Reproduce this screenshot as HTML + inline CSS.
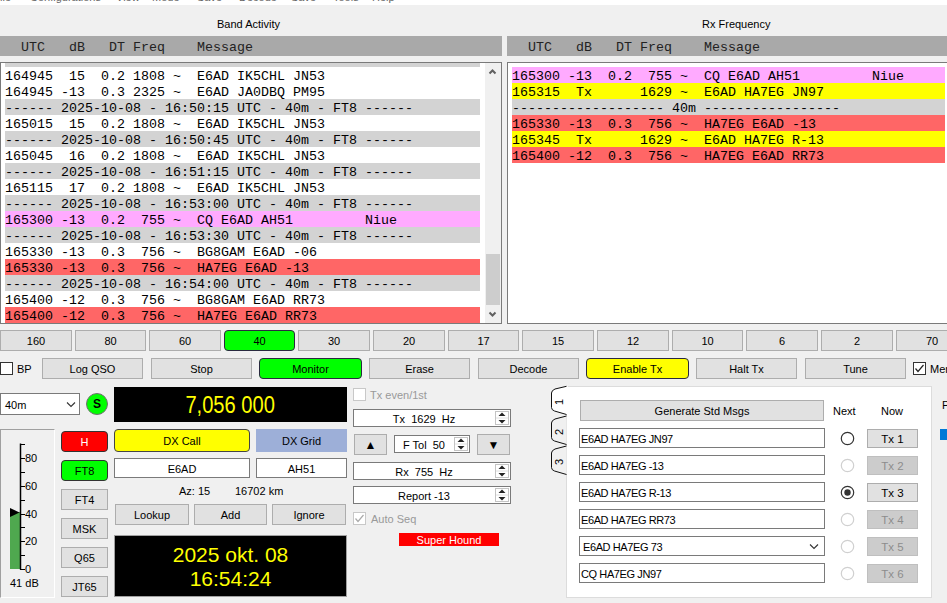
<!DOCTYPE html><html><head><meta charset="utf-8"><style>
html,body{margin:0;padding:0;}
body{width:947px;height:603px;overflow:hidden;position:relative;background:#f0f0f0;font-family:"Liberation Sans",sans-serif;font-size:11px;color:#000;}
.a{position:absolute;box-sizing:border-box;}
.m{font-family:"Liberation Mono",monospace;font-size:13.333px;white-space:pre;}
.t{position:absolute;white-space:pre;}
.btn{position:absolute;box-sizing:border-box;background:#e1e1e1;border:1px solid #adadad;text-align:center;white-space:pre;}
.s{display:inline-block;transform:scaleY(0.89);transform-origin:0 11px;}
.row{position:absolute;height:16px;line-height:20px;font-family:"Liberation Mono",monospace;font-size:13.333px;white-space:pre;overflow:hidden;}
</style></head><body>
<div class="a" style="left:0px;top:0px;width:947px;height:5px;background:#fff;"></div>
<div class="t" style="left:0px;top:-9px;font-size:11px;line-height:12px;color:#666;">ile</div>
<div class="t" style="left:30px;top:-9px;font-size:11px;line-height:12px;color:#666;">Configurations</div>
<div class="t" style="left:116px;top:-9px;font-size:11px;line-height:12px;color:#666;">View</div>
<div class="t" style="left:152px;top:-9px;font-size:11px;line-height:12px;color:#666;">Mode</div>
<div class="t" style="left:197px;top:-9px;font-size:11px;line-height:12px;color:#666;">Save</div>
<div class="t" style="left:239px;top:-9px;font-size:11px;line-height:12px;color:#666;">Decode</div>
<div class="t" style="left:291px;top:-9px;font-size:11px;line-height:12px;color:#666;">Save</div>
<div class="t" style="left:333px;top:-9px;font-size:11px;line-height:12px;color:#666;">Tools</div>
<div class="t" style="left:372px;top:-9px;font-size:11px;line-height:12px;color:#666;">Help</div>
<div class="t" style="left:217px;top:17px;line-height:14px;">Band Activity</div>
<div class="t" style="left:702px;top:17px;line-height:14px;">Rx Frequency</div>
<div class="a" style="left:0px;top:36px;width:502px;height:20px;background:#a9a9a9;"></div>
<div class="a" style="left:507px;top:36px;width:440px;height:20px;background:#a9a9a9;"></div>
<div class="row" style="left:5px;top:36px;color:#222;line-height:24px;height:20px;"><span class="s" style="transform-origin:0 11px">&#160;&#160;UTC&#160;&#160;&#160;dB&#160;&#160;&#160;DT&#160;Freq&#160;&#160;&#160;&#160;Message</span></div>
<div class="row" style="left:512px;top:36px;color:#222;line-height:24px;height:20px;"><span class="s" style="transform-origin:0 11px">&#160;&#160;UTC&#160;&#160;&#160;dB&#160;&#160;&#160;DT&#160;Freq&#160;&#160;&#160;&#160;Message</span></div>
<div class="a" style="left:0px;top:62px;width:502px;height:262px;background:#fff;border:1px solid #7a7a7a;"></div>
<div class="a" style="left:507px;top:62px;width:460px;height:262px;background:#fff;border:1px solid #7a7a7a;"></div>
<div class="a" style="left:1px;top:63px;width:484px;height:260px;overflow:hidden;">
<div class="row" style="left:4px;top:-12px;width:475px;background:#d3d3d3;"><span class="s"></span></div>
<div class="row" style="left:4px;top:4px;width:475px;"><span class="s">164945&#160;&#160;15&#160;&#160;0.2&#160;1808&#160;~&#160;&#160;E6AD&#160;IK5CHL&#160;JN53</span></div>
<div class="row" style="left:4px;top:20px;width:475px;"><span class="s">164945&#160;-13&#160;&#160;0.3&#160;2325&#160;~&#160;&#160;E6AD&#160;JA0DBQ&#160;PM95</span></div>
<div class="row" style="left:4px;top:36px;width:475px;background:#d3d3d3;"><span class="s">------&#160;2025-10-08&#160;-&#160;16:50:15&#160;UTC&#160;-&#160;40m&#160;-&#160;FT8&#160;------</span></div>
<div class="row" style="left:4px;top:52px;width:475px;"><span class="s">165015&#160;&#160;15&#160;&#160;0.2&#160;1808&#160;~&#160;&#160;E6AD&#160;IK5CHL&#160;JN53</span></div>
<div class="row" style="left:4px;top:68px;width:475px;background:#d3d3d3;"><span class="s">------&#160;2025-10-08&#160;-&#160;16:50:45&#160;UTC&#160;-&#160;40m&#160;-&#160;FT8&#160;------</span></div>
<div class="row" style="left:4px;top:84px;width:475px;"><span class="s">165045&#160;&#160;16&#160;&#160;0.2&#160;1808&#160;~&#160;&#160;E6AD&#160;IK5CHL&#160;JN53</span></div>
<div class="row" style="left:4px;top:100px;width:475px;background:#d3d3d3;"><span class="s">------&#160;2025-10-08&#160;-&#160;16:51:15&#160;UTC&#160;-&#160;40m&#160;-&#160;FT8&#160;------</span></div>
<div class="row" style="left:4px;top:116px;width:475px;"><span class="s">165115&#160;&#160;17&#160;&#160;0.2&#160;1808&#160;~&#160;&#160;E6AD&#160;IK5CHL&#160;JN53</span></div>
<div class="row" style="left:4px;top:132px;width:475px;background:#d3d3d3;"><span class="s">------&#160;2025-10-08&#160;-&#160;16:53:00&#160;UTC&#160;-&#160;40m&#160;-&#160;FT8&#160;------</span></div>
<div class="row" style="left:4px;top:148px;width:475px;background:#ffaaff;"><span class="s">165300&#160;-13&#160;&#160;0.2&#160;&#160;755&#160;~&#160;&#160;CQ&#160;E6AD&#160;AH51&#160;&#160;&#160;&#160;&#160;&#160;&#160;&#160;&#160;Niue</span></div>
<div class="row" style="left:4px;top:164px;width:475px;background:#d3d3d3;"><span class="s">------&#160;2025-10-08&#160;-&#160;16:53:30&#160;UTC&#160;-&#160;40m&#160;-&#160;FT8&#160;------</span></div>
<div class="row" style="left:4px;top:180px;width:475px;"><span class="s">165330&#160;-13&#160;&#160;0.3&#160;&#160;756&#160;~&#160;&#160;BG8GAM&#160;E6AD&#160;-06</span></div>
<div class="row" style="left:4px;top:196px;width:475px;background:#ff6666;"><span class="s">165330&#160;-13&#160;&#160;0.3&#160;&#160;756&#160;~&#160;&#160;HA7EG&#160;E6AD&#160;-13</span></div>
<div class="row" style="left:4px;top:212px;width:475px;background:#d3d3d3;"><span class="s">------&#160;2025-10-08&#160;-&#160;16:54:00&#160;UTC&#160;-&#160;40m&#160;-&#160;FT8&#160;------</span></div>
<div class="row" style="left:4px;top:228px;width:475px;"><span class="s">165400&#160;-12&#160;&#160;0.3&#160;&#160;756&#160;~&#160;&#160;BG8GAM&#160;E6AD&#160;RR73</span></div>
<div class="row" style="left:4px;top:244px;width:475px;background:#ff6666;"><span class="s">165400&#160;-12&#160;&#160;0.3&#160;&#160;756&#160;~&#160;&#160;HA7EG&#160;E6AD&#160;RR73</span></div>
</div>
<div class="a" style="left:485px;top:63px;width:16px;height:260px;background:#f0f0f0;"></div>
<div class="a" style="left:486px;top:254px;width:14px;height:51px;background:#cdcdcd;"></div>
<svg class="a" style="left:485px;top:63px;" width="16" height="260"><polyline points="4.5,10.5 7.5,7.5 10.5,10.5" fill="none" stroke="#606060" stroke-width="2"/><polyline points="4.5,249.5 7.5,252.5 10.5,249.5" fill="none" stroke="#606060" stroke-width="2"/></svg>
<div class="row" style="left:512px;top:67px;width:433px;background:#ffaaff;"><span class="s">165300&#160;-13&#160;&#160;0.2&#160;&#160;755&#160;~&#160;&#160;CQ&#160;E6AD&#160;AH51&#160;&#160;&#160;&#160;&#160;&#160;&#160;&#160;&#160;Niue</span></div>
<div class="row" style="left:512px;top:83px;width:433px;background:#ffff00;"><span class="s">165315&#160;&#160;Tx&#160;&#160;&#160;&#160;&#160;&#160;1629&#160;~&#160;&#160;E6AD&#160;HA7EG&#160;JN97</span></div>
<div class="row" style="left:512px;top:99px;width:433px;background:#d3d3d3;"><span class="s">-------------------&#160;40m&#160;-----------------</span></div>
<div class="row" style="left:512px;top:115px;width:433px;background:#ff6666;"><span class="s">165330&#160;-13&#160;&#160;0.3&#160;&#160;756&#160;~&#160;&#160;HA7EG&#160;E6AD&#160;-13</span></div>
<div class="row" style="left:512px;top:131px;width:433px;background:#ffff00;"><span class="s">165345&#160;&#160;Tx&#160;&#160;&#160;&#160;&#160;&#160;1629&#160;~&#160;&#160;E6AD&#160;HA7EG&#160;R-13</span></div>
<div class="row" style="left:512px;top:147px;width:433px;background:#ff6666;"><span class="s">165400&#160;-12&#160;&#160;0.3&#160;&#160;756&#160;~&#160;&#160;HA7EG&#160;E6AD&#160;RR73</span></div>
<div class="btn" style="left:0px;top:330px;width:72px;height:21px;line-height:21px;">160</div>
<div class="btn" style="left:75px;top:330px;width:71px;height:21px;line-height:21px;">80</div>
<div class="btn" style="left:149px;top:330px;width:72px;height:21px;line-height:21px;">60</div>
<div class="btn" style="left:224px;top:330px;width:71px;height:21px;line-height:21px;background:#00ff00;border-color:#2a2a40;border-radius:4px;">40</div>
<div class="btn" style="left:298px;top:330px;width:72px;height:21px;line-height:21px;">30</div>
<div class="btn" style="left:373px;top:330px;width:72px;height:21px;line-height:21px;">20</div>
<div class="btn" style="left:448px;top:330px;width:71px;height:21px;line-height:21px;">17</div>
<div class="btn" style="left:522px;top:330px;width:72px;height:21px;line-height:21px;">15</div>
<div class="btn" style="left:597px;top:330px;width:72px;height:21px;line-height:21px;">12</div>
<div class="btn" style="left:672px;top:330px;width:71px;height:21px;line-height:21px;">10</div>
<div class="btn" style="left:746px;top:330px;width:72px;height:21px;line-height:21px;">6</div>
<div class="btn" style="left:821px;top:330px;width:72px;height:21px;line-height:21px;">2</div>
<div class="btn" style="left:896px;top:330px;width:72px;height:21px;line-height:21px;">70</div>
<div class="a" style="left:0px;top:362px;width:13px;height:13px;background:#fff;border:1px solid #333;"></div>
<div class="t" style="left:17px;top:362px;line-height:15px;">BP</div>
<div class="btn" style="left:42px;top:358px;width:101px;height:21px;line-height:21px;">Log QSO</div>
<div class="btn" style="left:151px;top:358px;width:101px;height:21px;line-height:21px;">Stop</div>
<div class="btn" style="left:259px;top:358px;width:103px;height:21px;line-height:21px;background:#00ff00;border-color:#2a2a40;border-radius:4px;">Monitor</div>
<div class="btn" style="left:369px;top:358px;width:101px;height:21px;line-height:21px;">Erase</div>
<div class="btn" style="left:478px;top:358px;width:101px;height:21px;line-height:21px;">Decode</div>
<div class="btn" style="left:586px;top:358px;width:103px;height:21px;line-height:21px;background:#ffff00;border-color:#2a2a40;border-radius:4px;">Enable Tx</div>
<div class="btn" style="left:696px;top:358px;width:101px;height:21px;line-height:21px;">Halt Tx</div>
<div class="btn" style="left:805px;top:358px;width:101px;height:21px;line-height:21px;">Tune</div>
<div class="a" style="left:913px;top:362px;width:13px;height:13px;background:#fff;border:1px solid #333;"></div>
<svg class="a" style="left:913px;top:362px;" width="13" height="13"><polyline points="2.5,6.5 5,9.5 10.5,3" fill="none" stroke="#222" stroke-width="1.2"/></svg>
<div class="t" style="left:930px;top:362px;line-height:15px;">Menus</div>
<div class="a" style="left:0px;top:393px;width:80px;height:22px;background:#fff;border:1px solid #7a7a7a;"></div>
<div class="t" style="left:5px;top:398px;line-height:14px;">40m</div>
<svg class="a" style="left:66px;top:401px;" width="11" height="8"><polyline points="1,1.5 5,5.5 9,1.5" fill="none" stroke="#333" stroke-width="1.1"/></svg>
<div class="a" style="left:86px;top:393px;width:22px;height:22px;border-radius:50%;background:#00ff00;border:1px solid #707070;text-align:center;font-weight:bold;font-size:12px;line-height:20px;">S</div>
<div class="a" style="left:114px;top:387px;width:233px;height:35px;background:#000;color:#ffff00;font-size:23px;line-height:37px;overflow:hidden;text-align:center;"><span style="display:inline-block;transform:scaleX(0.875);">7,056 000</span></div>
<div class="a" style="left:0px;top:429px;width:55px;height:169px;border-top:1px solid #a0a0a0;border-left:1px solid #a0a0a0;border-right:1px solid #fff;border-bottom:1px solid #fff;"></div>
<div class="a" style="left:10px;top:512px;width:10px;height:57px;background:#4fa84f;"></div>
<svg class="a" style="left:0;top:430px;" width="54" height="167"><line x1="20.5" y1="13.5" x2="20.5" y2="139.5" stroke="#000" stroke-width="1.5"/><line x1="20" y1="139.5" x2="25" y2="139.5" stroke="#000" stroke-width="1"/><line x1="20" y1="125.5" x2="25" y2="125.5" stroke="#000" stroke-width="1"/><line x1="20" y1="111.5" x2="25" y2="111.5" stroke="#000" stroke-width="1"/><line x1="20" y1="97.5" x2="25" y2="97.5" stroke="#000" stroke-width="1"/><line x1="20" y1="84.5" x2="25" y2="84.5" stroke="#000" stroke-width="1"/><line x1="20" y1="70.5" x2="25" y2="70.5" stroke="#000" stroke-width="1"/><line x1="20" y1="56.5" x2="25" y2="56.5" stroke="#000" stroke-width="1"/><line x1="20" y1="42.5" x2="25" y2="42.5" stroke="#000" stroke-width="1"/><line x1="20" y1="28.5" x2="25" y2="28.5" stroke="#000" stroke-width="1"/><line x1="20" y1="14.5" x2="25" y2="14.5" stroke="#000" stroke-width="1"/><polygon points="10,78 19.5,82.5 10,87" fill="#000"/></svg>
<div class="t" style="left:25px;top:562px;line-height:14px;font-size:11px;">0</div>
<div class="t" style="left:25px;top:534px;line-height:14px;font-size:11px;">20</div>
<div class="t" style="left:25px;top:507px;line-height:14px;font-size:11px;">40</div>
<div class="t" style="left:25px;top:479px;line-height:14px;font-size:11px;">60</div>
<div class="t" style="left:25px;top:451px;line-height:14px;font-size:11px;">80</div>
<div class="t" style="left:10px;top:576px;line-height:14px;">41 dB</div>
<div class="btn" style="left:61px;top:431px;width:47px;height:21px;line-height:21px;background:#ff0000;color:#fff;border-color:#333;border-radius:4px;">H</div>
<div class="btn" style="left:61px;top:460px;width:47px;height:21px;line-height:21px;background:#00ff00;color:#000;border-color:#333;border-radius:4px;">FT8</div>
<div class="btn" style="left:61px;top:489px;width:47px;height:21px;line-height:21px;">FT4</div>
<div class="btn" style="left:61px;top:518px;width:47px;height:21px;line-height:21px;">MSK</div>
<div class="btn" style="left:61px;top:547px;width:47px;height:21px;line-height:21px;">Q65</div>
<div class="btn" style="left:61px;top:576px;width:47px;height:21px;line-height:21px;">JT65</div>
<div class="btn" style="left:114px;top:429px;width:136px;height:23px;line-height:23px;background:#ffff00;border-color:#444;border-radius:4px;">DX Call</div>
<div class="btn" style="left:256px;top:429px;width:91px;height:23px;line-height:25px;background:#9dafd8;border:none;">DX Grid</div>
<div class="btn" style="left:114px;top:458px;width:136px;height:20px;line-height:20px;background:#fff;border-color:#7a7a7a;">E6AD</div>
<div class="btn" style="left:256px;top:458px;width:91px;height:20px;line-height:20px;background:#fff;border-color:#7a7a7a;">AH51</div>
<div class="t" style="left:179px;top:484px;line-height:14px;">Az: 15</div>
<div class="t" style="left:235px;top:484px;line-height:14px;">16702 km</div>
<div class="btn" style="left:115px;top:504px;width:74px;height:21px;line-height:21px;">Lookup</div>
<div class="btn" style="left:194px;top:504px;width:73px;height:21px;line-height:21px;">Add</div>
<div class="btn" style="left:272px;top:504px;width:74px;height:21px;line-height:21px;">Ignore</div>
<div class="a" style="left:114px;top:535px;width:233px;height:62px;background:#000;border:1px solid #a0a0a0;color:#ffff00;font-size:21px;line-height:24px;text-align:center;padding-top:7px;">2025 okt. 08<br>16:54:24</div>
<div class="a" style="left:353px;top:388px;width:13px;height:13px;background:#fff;border:1px solid #c8c8c8;"></div>
<div class="t" style="left:370px;top:388px;line-height:14px;color:#999;">Tx even/1st</div>
<div class="btn" style="left:353px;top:409px;width:158px;height:18px;line-height:18px;background:#fff;border-color:#7a7a7a;padding-right:16px;">Tx  1629  Hz</div>
<svg class="a" style="left:495px;top:411px;" width="14" height="14"><rect x="0.5" y="0.5" width="13" height="13" fill="#fff" stroke="#c4c4c4"/><line x1="1" y1="7.0" x2="13" y2="7.0" stroke="#e0e0e0"/><polygon points="3.5,5.0 7,1.5 10.5,5.0" fill="#222"/><polygon points="3.5,9.0 7,12.5 10.5,9.0" fill="#222"/></svg>
<div class="btn" style="left:354px;top:434px;width:33px;height:21px;line-height:21px;font-size:12px;">&#9650;</div>
<div class="btn" style="left:394px;top:435px;width:76px;height:18px;line-height:18px;background:#fff;border-color:#7a7a7a;padding-right:16px;">F Tol  50</div>
<svg class="a" style="left:454px;top:437px;" width="14" height="14"><rect x="0.5" y="0.5" width="13" height="13" fill="#fff" stroke="#c4c4c4"/><line x1="1" y1="7.0" x2="13" y2="7.0" stroke="#e0e0e0"/><polygon points="3.5,5.0 7,1.5 10.5,5.0" fill="#222"/><polygon points="3.5,9.0 7,12.5 10.5,9.0" fill="#222"/></svg>
<div class="btn" style="left:477px;top:434px;width:33px;height:21px;line-height:21px;font-size:12px;">&#9660;</div>
<div class="btn" style="left:353px;top:462px;width:158px;height:18px;line-height:18px;background:#fff;border-color:#7a7a7a;padding-right:16px;">Rx  755  Hz</div>
<svg class="a" style="left:495px;top:464px;" width="14" height="14"><rect x="0.5" y="0.5" width="13" height="13" fill="#fff" stroke="#c4c4c4"/><line x1="1" y1="7.0" x2="13" y2="7.0" stroke="#e0e0e0"/><polygon points="3.5,5.0 7,1.5 10.5,5.0" fill="#222"/><polygon points="3.5,9.0 7,12.5 10.5,9.0" fill="#222"/></svg>
<div class="btn" style="left:353px;top:486px;width:158px;height:18px;line-height:18px;background:#fff;border-color:#7a7a7a;padding-right:16px;">Report -13</div>
<svg class="a" style="left:495px;top:488px;" width="14" height="14"><rect x="0.5" y="0.5" width="13" height="13" fill="#fff" stroke="#c4c4c4"/><line x1="1" y1="7.0" x2="13" y2="7.0" stroke="#e0e0e0"/><polygon points="3.5,5.0 7,1.5 10.5,5.0" fill="#222"/><polygon points="3.5,9.0 7,12.5 10.5,9.0" fill="#222"/></svg>
<div class="a" style="left:353px;top:512px;width:13px;height:13px;background:#fff;border:1px solid #c8c8c8;"></div>
<svg class="a" style="left:353px;top:512px;" width="13" height="13"><polyline points="2.5,6.5 5,9.5 10.5,3" fill="none" stroke="#aaa" stroke-width="1.2"/></svg>
<div class="t" style="left:371px;top:512px;line-height:14px;color:#999;">Auto Seq</div>
<div class="a" style="left:399px;top:533px;width:100px;height:13px;background:#ff0000;color:#fff;text-align:center;line-height:15px;overflow:hidden;">Super Hound</div>
<div class="a" style="left:566px;top:386px;width:366px;height:212px;background:#fff;border:1px solid #dcdcdc;"></div>
<svg class="a" style="left:548px;top:380px;" width="21" height="100"><path d="M18.5,36 L7,39 Q3.5,40.5 3.5,43 L3.5,57.5 Q3.5,60 6.5,61 L18.5,64.5" fill="#f0f0f0" stroke="#111" stroke-width="1"/><path d="M18.5,66 L7,69 Q3.5,70.5 3.5,73 L3.5,87.5 Q3.5,90 6.5,91 L18.5,94.5" fill="#f0f0f0" stroke="#111" stroke-width="1"/><path d="M19,6.3 L7,9 Q3.5,10.5 3.5,13 L3.5,27.5 Q3.5,30 6.5,31 L19,34.5 L20,34.5 L20,6.3 Z" fill="#fff" stroke="none"/><path d="M18.5,6.3 L7,9 Q3.5,10.5 3.5,13 L3.5,27.5 Q3.5,30 6.5,31 L18.5,34.5" fill="none" stroke="#111" stroke-width="1"/></svg>
<div class="t" style="left:553px;top:395.5px;width:12px;height:12px;text-align:center;line-height:12px;font-size:11px;transform:rotate(-90deg);">1</div>
<div class="t" style="left:553px;top:425.5px;width:12px;height:12px;text-align:center;line-height:12px;font-size:11px;transform:rotate(-90deg);">2</div>
<div class="t" style="left:553px;top:455.5px;width:12px;height:12px;text-align:center;line-height:12px;font-size:11px;transform:rotate(-90deg);">3</div>
<div class="btn" style="left:580px;top:400px;width:244px;height:21px;line-height:21px;">Generate Std Msgs</div>
<div class="t" style="left:833px;top:404px;line-height:14px;">Next</div>
<div class="t" style="left:881px;top:404px;line-height:14px;">Now</div>
<div class="a" style="left:579px;top:428px;width:246px;height:20px;background:#fff;border:1px solid #7a7a7a;line-height:20px;padding-left:1px;white-space:pre;letter-spacing:-0.4px;">E6AD&#160;HA7EG&#160;JN97</div>
<svg class="a" style="left:840px;top:431px;" width="15" height="15"><circle cx="7.5" cy="7.5" r="6.2" fill="#fff" stroke="#333" stroke-width="1.2"/></svg>
<div class="btn" style="left:867px;top:429px;width:51px;height:19px;line-height:19px;font-size:11.5px;">Tx 1</div>
<div class="a" style="left:579px;top:455px;width:246px;height:20px;background:#fff;border:1px solid #7a7a7a;line-height:20px;padding-left:1px;white-space:pre;letter-spacing:-0.4px;">E6AD&#160;HA7EG&#160;-13</div>
<svg class="a" style="left:840px;top:458px;" width="15" height="15"><circle cx="7.5" cy="7.5" r="6.2" fill="#fff" stroke="#d0d0d0" stroke-width="1.2"/></svg>
<div class="btn" style="left:867px;top:456px;width:51px;height:19px;line-height:19px;font-size:11.5px;background:#cccccc;border-color:#bfbfbf;color:#8c8c8c;">Tx 2</div>
<div class="a" style="left:579px;top:482px;width:246px;height:20px;background:#fff;border:1px solid #7a7a7a;line-height:20px;padding-left:1px;white-space:pre;letter-spacing:-0.4px;">E6AD&#160;HA7EG&#160;R-13</div>
<svg class="a" style="left:840px;top:485px;" width="15" height="15"><circle cx="7.5" cy="7.5" r="6.2" fill="#fff" stroke="#333" stroke-width="1.2"/><circle cx="7.5" cy="7.5" r="3.2" fill="#333"/></svg>
<div class="btn" style="left:867px;top:483px;width:51px;height:19px;line-height:19px;font-size:11.5px;">Tx 3</div>
<div class="a" style="left:579px;top:509px;width:246px;height:20px;background:#fff;border:1px solid #7a7a7a;line-height:20px;padding-left:1px;white-space:pre;letter-spacing:-0.4px;">E6AD&#160;HA7EG&#160;RR73</div>
<svg class="a" style="left:840px;top:512px;" width="15" height="15"><circle cx="7.5" cy="7.5" r="6.2" fill="#fff" stroke="#d0d0d0" stroke-width="1.2"/></svg>
<div class="btn" style="left:867px;top:510px;width:51px;height:19px;line-height:19px;font-size:11.5px;background:#cccccc;border-color:#bfbfbf;color:#8c8c8c;">Tx 4</div>
<div class="a" style="left:579px;top:536px;width:246px;height:20px;background:#fff;border:1px solid #7a7a7a;line-height:20px;padding-left:3px;white-space:pre;letter-spacing:-0.4px;">E6AD&#160;HA7EG&#160;73</div>
<svg class="a" style="left:809px;top:543px;" width="11" height="8"><polyline points="1,1.5 5,5.5 9,1.5" fill="none" stroke="#333" stroke-width="1.1"/></svg>
<svg class="a" style="left:840px;top:539px;" width="15" height="15"><circle cx="7.5" cy="7.5" r="6.2" fill="#fff" stroke="#d0d0d0" stroke-width="1.2"/></svg>
<div class="btn" style="left:867px;top:537px;width:51px;height:19px;line-height:19px;font-size:11.5px;background:#cccccc;border-color:#bfbfbf;color:#8c8c8c;">Tx 5</div>
<div class="a" style="left:579px;top:563px;width:246px;height:20px;background:#fff;border:1px solid #7a7a7a;line-height:20px;padding-left:1px;white-space:pre;letter-spacing:-0.4px;">CQ&#160;HA7EG&#160;JN97</div>
<svg class="a" style="left:840px;top:566px;" width="15" height="15"><circle cx="7.5" cy="7.5" r="6.2" fill="#fff" stroke="#d0d0d0" stroke-width="1.2"/></svg>
<div class="btn" style="left:867px;top:564px;width:51px;height:19px;line-height:19px;font-size:11.5px;background:#cccccc;border-color:#bfbfbf;color:#8c8c8c;">Tx 6</div>
<div class="t" style="left:942px;top:398px;line-height:14px;">P</div>
<div class="a" style="left:940px;top:429px;width:10px;height:11px;background:#0078d7;"></div>
</body></html>
